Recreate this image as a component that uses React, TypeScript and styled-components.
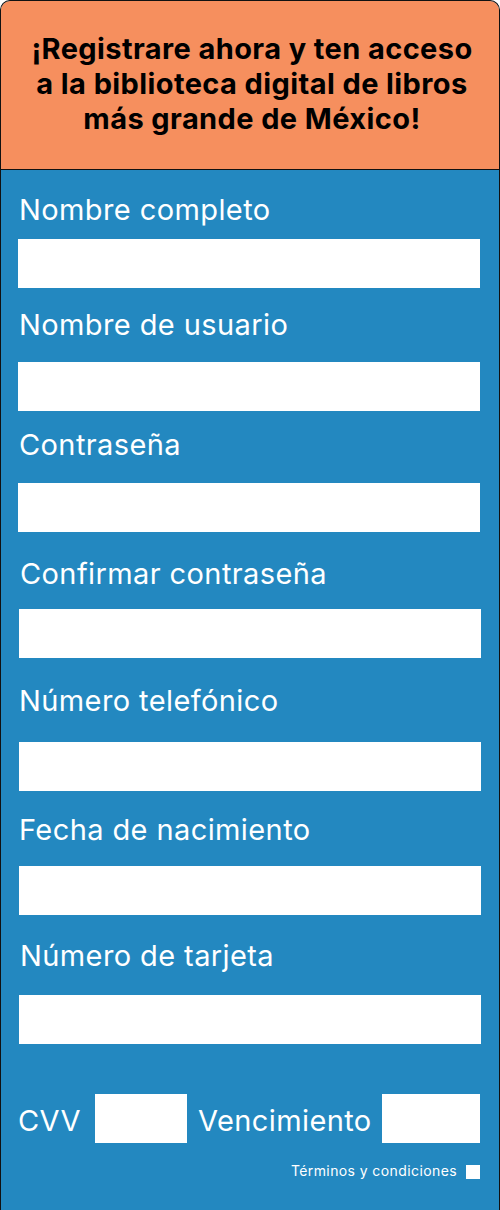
import React from "react";
import styled, { createGlobalStyle } from "styled-components";

const Global = createGlobalStyle`
  html, body { margin: 0; padding: 0; background: #ffffff; }
  body { font-family: Inter, "Noto Sans", Arial, sans-serif; }
  * { box-sizing: border-box; }
`;

const Card = styled.div`
  width: 500px;
  height: 1210px;
  border: 1px solid #111;
  border-bottom: none;
  border-radius: 10px 10px 0 0;
  overflow: hidden;
  display: flex;
  flex-direction: column;
  background: #2388c0;
`;

const Header = styled.header`
  height: 169px;
  flex: none;
  background: #f68f5e;
  border-bottom: 1px solid #111;
  display: flex;
  align-items: flex-start;
  justify-content: center;
  padding-top: 30px;
  padding-left: 4px;
`;

const Title = styled.h1`
  margin: 0;
  font-family: Inter, Arial, sans-serif;
  font-weight: 700;
  font-size: 29px;
  line-height: 35px;
  letter-spacing: 0.4px;
  color: #000;
  text-align: center;
  white-space: nowrap;
`;

const Body = styled.main`
  flex: 1;
  display: flex;
  flex-direction: column;
  padding: 0 19px 0 17px;
`;

const Label = styled.label<{ $top: number; $indent?: number }>`
  display: block;
  margin-top: ${(p) => p.$top}px;
  margin-left: ${(p) => p.$indent ?? 0}px;
  font-size: 29px;
  line-height: 35px;
  letter-spacing: 0.4px;
  color: #ffffff;
  font-weight: 400;
`;

const Input = styled.div<{ $top: number; $indent?: number }>`
  margin-top: ${(p) => p.$top}px;
  margin-left: ${(p) => p.$indent ?? 0}px;
  margin-right: ${(p) => -(p.$indent ?? 0)}px;
  height: 49px;
  background: #ffffff;
`;

const Row = styled.div`
  margin-top: 50px;
  display: grid;
  grid-template-columns: 77px 92px 195px 98px;
  align-items: center;
  height: 49px;
`;

const RowLabel = styled.span<{ $pad: number }>`
  font-size: 29px;
  line-height: 35px;
  letter-spacing: 0.4px;
  color: #fff;
  padding-left: ${(p) => p.$pad}px;
  padding-top: 4px;
`;

const SmallBox = styled.div`
  height: 49px;
  background: #fff;
`;

const Terms = styled.div`
  margin-top: 22px;
  display: flex;
  align-items: center;
  justify-content: flex-end;
  gap: 9px;
`;

const TermsText = styled.span`
  font-size: 14px;
  line-height: 16px;
  letter-spacing: 0.4px;
  color: #fff;
  margin-top: -2px;
`;

const Check = styled.div`
  width: 14px;
  height: 14px;
  background: #fff;
`;

const fields = [
  { label: "Nombre completo", top: 22, gap: 12, indent: 1 },
  { label: "Nombre de usuario", top: 19, gap: 20, indent: 1 },
  { label: "Contraseña", top: 16, gap: 21, indent: 1 },
  { label: "Confirmar contraseña", top: 24, gap: 18, indent: 2, inputIndent: 1 },
  { label: "Número telefónico", top: 25, gap: 24, indent: 1, inputIndent: 1 },
  { label: "Fecha de nacimiento", top: 21, gap: 19, indent: 1, inputIndent: 1 },
  { label: "Número de tarjeta", top: 23, gap: 22, indent: 2, inputIndent: 1 },
];

export default function App() {
  return (
    <>
      <Global />
      <Card>
        <Header>
          <Title>
            ¡Registrare ahora y ten acceso
            <br />
            a la biblioteca digital de libros
            <br />
            más grande de México!
          </Title>
        </Header>
        <Body>
          {fields.map((f) => (
            <React.Fragment key={f.label}>
              <Label $top={f.top} $indent={f.indent}>
                {f.label}
              </Label>
              <Input $top={f.gap} $indent={f.inputIndent} />
            </React.Fragment>
          ))}
          <Row>
            <RowLabel $pad={0}>CVV</RowLabel>
            <SmallBox />
            <RowLabel $pad={11}>Vencimiento</RowLabel>
            <SmallBox />
          </Row>
          <Terms>
            <TermsText>Términos y condiciones</TermsText>
            <Check />
          </Terms>
        </Body>
      </Card>
    </>
  );
}
